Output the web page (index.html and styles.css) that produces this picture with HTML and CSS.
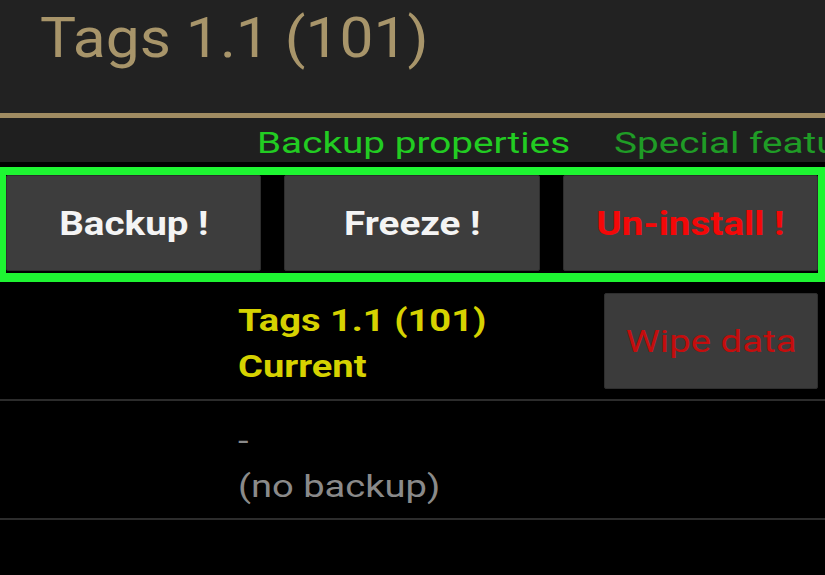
FILE: index.html
```html
<!DOCTYPE html>
<html>
<head>
<meta charset="utf-8">
<link rel="stylesheet" href="styles.css">
</head>
<body>
<div class="screen">
  <header class="title-bar">
    <h1 class="title"><span class="wide wide-title">Tags 1.1 (101)</span></h1>
  </header>
  <div class="title-rule"></div>
  <nav class="tabs">
    <div class="tab-strip">
      <span class="tab tab-active">Backup properties</span>
      <span class="tab tab-next">Special features</span>
    </div>
  </nav>
  <div class="actions">
    <button class="action"><span class="wide wide-btn">Backup !</span></button>
    <button class="action"><span class="wide wide-btn">Freeze !</span></button>
    <button class="action action-danger"><span class="wide wide-btn">Un-install !</span></button>
  </div>
  <div class="row row-current">
    <div class="row-text current-text">
      <div><span class="wide wide-row">Tags 1.1 (101)</span></div>
      <div><span class="wide wide-row">Current</span></div>
    </div>
    <button class="wipe"><span class="wide wide-btn2">Wipe data</span></button>
  </div>
  <div class="row row-backup">
    <div class="row-text backup-text">
      <div class="dash"><span class="wide wide-row">-</span></div>
      <div><span class="wide wide-row">(no backup)</span></div>
    </div>
  </div>
</div>
</body>
</html>
```

FILE: styles.css
```css
html, body {
  margin: 0;
  padding: 0;
  background: #000;
}
.screen {
  width: 825px;
  height: 575px;
  overflow: hidden;
  background: #000;
  font-family: Roboto, "Noto Sans", sans-serif;
}
.wide {
  display: inline-block;
  white-space: nowrap;
  transform-origin: left center;
}
.wide-title { transform: scaleX(1.1); }
.wide-row { transform: scaleX(1.19); }
.wide-btn { transform: scaleX(1.17); transform-origin: center center; }
.wide-btn2 { transform: scaleX(1.2); transform-origin: center center; }
.title-bar {
  height: 113px;
  background: #222222;
  padding-left: 40px;
  box-sizing: border-box;
}
.title {
  margin: 0;
  font-weight: 400;
  font-size: 55px;
  line-height: 76px;
  color: #a8956a;
  white-space: nowrap;
}
.title-rule {
  height: 5px;
  background: #a08c62;
}
.tabs {
  height: 44px;
  background: #1f1f1f;
  padding-left: 257px;
  overflow: hidden;
  margin-bottom: 5px;
}
.tab-strip {
  display: flex;
  gap: 34px;
  white-space: nowrap;
  font-size: 30px;
  line-height: 50px;
  transform: scaleX(1.29);
  transform-origin: left center;
}
.tab-active { color: #22cc22; }
.tab-next { color: #1f9c26; }
.actions {
  display: grid;
  grid-template-columns: repeat(3, 1fr);
  gap: 23px;
  border: solid #1ef532;
  border-width: 8px 7px 9px 6px;
  padding: 0 0 2px 0;
  background: #000;
}
.action {
  height: 96px;
  background: #3d3d3d;
  border: 1px solid #2e2e2e;
  border-radius: 2px;
  color: #f4f4f4;
  font-family: Roboto, "Noto Sans", sans-serif;
  font-weight: 700;
  font-size: 33px;
  padding: 0;
}
.action-danger { color: #f40808; }
.row {
  display: flex;
  align-items: flex-start;
  border-bottom: 2px solid #2c2c2c;
  box-sizing: border-box;
  height: 119px;
  padding-left: 238px;
}
.row-text {
  flex: 1;
  font-size: 32px;
  line-height: 46px;
}
.current-text {
  color: #d6d200;
  font-weight: 700;
  padding-top: 15px;
}
.wipe {
  margin-top: 11px;
  margin-right: 7px;
  width: 214px;
  height: 96px;
  background: #3b3b3b;
  border: 1px solid #2e2e2e;
  border-radius: 2px;
  color: #c40d0d;
  font-family: Roboto, "Noto Sans", sans-serif;
  font-size: 32px;
  padding: 0;
}
.backup-text {
  color: #8a8a8a;
  padding-top: 16px;
}
```
